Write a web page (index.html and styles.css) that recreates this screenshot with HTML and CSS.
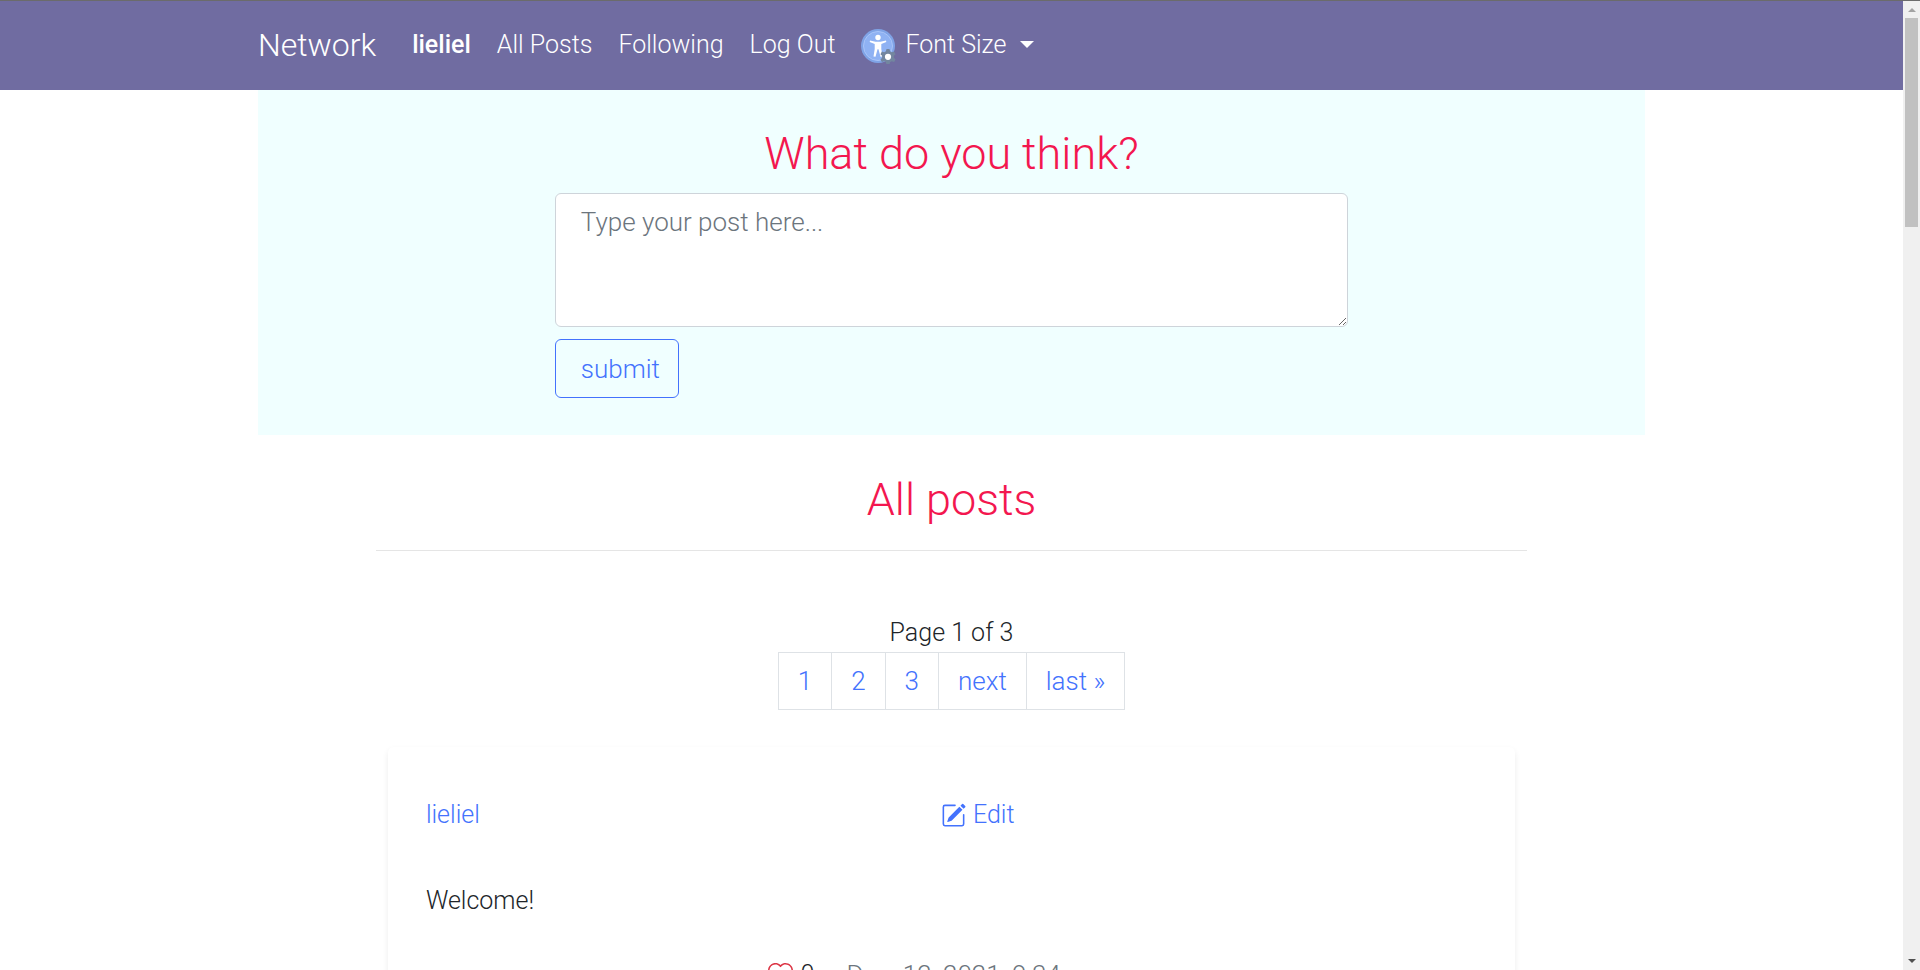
FILE: index.html
```html
<!DOCTYPE html>
<html lang="en">
<head>
<meta charset="utf-8">
<title>Network</title>
<link rel="stylesheet" href="styles.css">
</head>
<body>
<div class="viewport">
  <div class="page">
    <nav class="navbar">
      <div class="container navbar-inner">
        <a class="brand" href="#">Network</a>
        <a class="nav-link user" href="#">lieliel</a>
        <a class="nav-link" href="#">All Posts</a>
        <a class="nav-link" href="#">Following</a>
        <a class="nav-link" href="#">Log Out</a>
        <button class="nav-link font-size" type="button">
          <svg class="access-icon" viewBox="0 0 36 36" aria-hidden="true">
            <circle cx="17" cy="18" r="17" fill="#7fa3e6"/>
            <circle cx="17" cy="18" r="14.5" fill="#8fb2f3" stroke="#a9c5f8" stroke-width="1"/>
            <circle cx="17" cy="9.500" r="2.700" fill="#fff"/>
            <path d="M9 12.500l5.500 1.300h5l5.500-1.300.3 1.500-5 2v5l1.200 7.500-2 .3-2-7.500h-1l-2 7.500-2-.3 1.200-7.500v-5l-5-2z" fill="#fff"/>
            <path d="M25.500 21h3l.6 2.300 1.700 1 2.300-.7 1.500 2.600-1.700 1.600v2l1.700 1.600-1.500 2.600-2.300-.7-1.700 1-.6 2.300h-3l-.6-2.300-1.700-1-2.300.7-1.500-2.600 1.700-1.600v-2l-1.700-1.600 1.500-2.600 2.300.7 1.700-1z" fill="#73869f"/>
            <circle cx="27" cy="28.800" r="3.100" fill="#fff"/>
          </svg>
          <span>Font Size</span>
          <span class="caret"></span>
        </button>
      </div>
    </nav>
    <main class="container">
      <form class="composer">
        <label class="title" for="post">What do you think?</label>
        <div class="composer-fields">
          <textarea id="post" placeholder="Type your post here..."></textarea>
          <button class="submit" type="button">submit</button>
        </div>
      </form>
      <section class="feed">
        <h1 class="title">All posts</h1>
        <hr class="rule">
        <p class="page-count">Page 1 of 3</p>
        <nav class="pagination" aria-label="Pages">
          <a href="#">1</a><a href="#">2</a><a href="#">3</a><a href="#">next</a><a href="#">last »</a>
        </nav>
        <article class="card">
          <header class="card-head">
            <a href="#">lieliel</a>
            <a class="edit" href="#">
              <svg class="icon" viewBox="0 0 16 16" fill="currentColor" aria-hidden="true">
                <path d="M15.502 1.940a.5.5 0 0 1 0 .706L14.459 3.690l-2-2L13.502.646a.5.5 0 0 1 .707 0l1.293 1.293zm-1.750 2.456-2-2L4.939 9.210a.5.5 0 0 0-.121.196l-.805 2.414a.25.25 0 0 0 .316.316l2.414-.805a.5.5 0 0 0 .196-.120l6.813-6.814z"/>
                <path fill-rule="evenodd" d="M1 13.500A1.500 1.500 0 0 0 2.500 15h11a1.500 1.500 0 0 0 1.500-1.500v-6a.5.5 0 0 0-1 0v6a.5.5 0 0 1-.5.5h-11a.5.5 0 0 1-.5-.5v-11a.5.5 0 0 1 .5-.5H9a.5.5 0 0 0 0-1H2.500A1.500 1.500 0 0 0 1 2.500v11z"/>
              </svg>
              <span>Edit</span>
            </a>
          </header>
          <p class="post-text">Welcome!</p>
          <footer class="card-foot">
            <button class="like" type="button" aria-label="Like">
              <svg class="heart" viewBox="0 0 16 16" fill="currentColor" aria-hidden="true">
                <path d="m8 2.748-.717-.737C5.600.281 2.514.878 1.400 3.053c-.523 1.023-.641 2.500.314 4.385.920 1.815 2.834 3.989 6.286 6.357 3.452-2.368 5.365-4.542 6.286-6.357.955-1.886.838-3.362.314-4.385C13.486.878 10.400.280 8.717 2.010L8 2.748zM8 15C-7.333 4.868 3.279-3.040 7.824 1.143c.060.055.119.112.176.171a3.120 3.120 0 0 1 .176-.170C12.720-3.042 23.333 4.867 8 15z"/>
              </svg>
            </button>
            <span>0</span>
            <time class="date">Dec. 12, 2021, 9:34</time>
          </footer>
        </article>
      </section>
    </main>
  </div>
  <div class="scrollbar" aria-hidden="true">
    <span class="arrow up"></span>
    <span class="thumb"></span>
    <span class="arrow down"></span>
  </div>
</div>
</body>
</html>
```
FILE: styles.css
```css
* { box-sizing: border-box; }
body {
  margin: 0;
  font: 300 25px/38px Roboto, "Liberation Sans", sans-serif;
  color: #212529;
  background: #fff;
}
a { color: #4372fd; text-decoration: none; }
button, textarea { font: inherit; }
p, h1 { margin: 0; }
.viewport {
  display: grid;
  grid-template-columns: minmax(0, 1fr) 17px;
  height: 100vh;
  overflow: hidden;
  border-top: 1px solid #6b6b6b;
}
.page { overflow: hidden; }
.container { width: 73%; max-width: 1387px; margin: 0 auto; }
.navbar { background: #706ca1; }
.navbar-inner {
  display: flex;
  align-items: center;
  gap: 26px;
  height: 89px;
  padding-bottom: 2px;
}
.brand, .nav-link { color: #fff; }
.brand { font-size: 32px; margin-right: 10px; }
.user { font-weight: 500; }
.font-size {
  display: flex;
  align-items: center;
  gap: 8px;
  padding: 0;
  border: 0;
  background: none;
}
.access-icon { width: 36px; height: 36px; margin-top: 2px; }
.caret {
  margin-left: 6px;
  border: 7px solid transparent;
  border-top-color: #fff;
  border-bottom: 0;
}
.composer {
  padding: 36px 0 37px;
  background: #f0ffff;
}
.title {
  display: block;
  font-size: 45px;
  font-weight: 300;
  line-height: 55px;
  text-align: center;
  color: #f3174f;
}
.composer-fields {
  display: flex;
  flex-direction: column;
  align-items: flex-start;
  gap: 12px;
  width: 57.2%;
  margin: 12px auto 0;
}
textarea, .submit, .pagination, .date { font-size: 26px; }
textarea {
  width: 100%;
  height: 134px;
  padding: 9px 25px;
  border: 1px solid #ced4da;
  border-radius: 6px;
  background: #fff;
}
textarea::placeholder { color: #6c757d; }
.submit {
  height: 59px;
  padding: 0 18px 0 25px;
  border: 1px solid #4372fd;
  border-radius: 6px;
  background: none;
  color: #4372fd;
}
.feed { width: 83%; margin: 0 auto; padding-top: 37px; }
.rule { margin: 23px 0 63px; border: 0; border-top: 1px solid #e5e5e5; }
.page-count { text-align: center; }
.pagination { display: flex; justify-content: center; }
.pagination a {
  padding: 9px 19px;
  border: 1px solid #dee2e6;
}
.pagination a + a { border-left: 0; }
.card {
  margin: 37px 12px 0;
  padding: 49px 38px;
  border-radius: 6px;
  box-shadow: 0 3px 6px rgba(0, 0, 0, 0.075);
}
.card-head { display: grid; grid-template-columns: 49% 51%; }
.edit { display: flex; align-items: center; gap: 7px; }
.icon { width: 25px; height: 25px; }
.post-text { margin-top: 48px; }
.card-foot {
  display: flex;
  align-items: center;
  gap: 8px;
  margin-top: 36px;
  padding-left: 32.5%;
}
.like { display: flex; padding: 0; border: 0; background: none; color: #dc3545; }
.heart { width: 25px; height: 25px; }
.date { margin-left: 24px; color: #6c757d; }
.scrollbar {
  display: flex;
  flex-direction: column;
  align-items: center;
  padding: 7px 0;
  background: #f0f0f0;
}
.arrow { border: 4px solid transparent; }
.up { border-top: 0; border-bottom-color: #a3a3a3; }
.down { border-bottom: 0; border-top-color: #505050; margin-top: auto; }
.thumb { width: 13px; height: 209px; margin-top: 6px; background: #c1c1c1; }
```
